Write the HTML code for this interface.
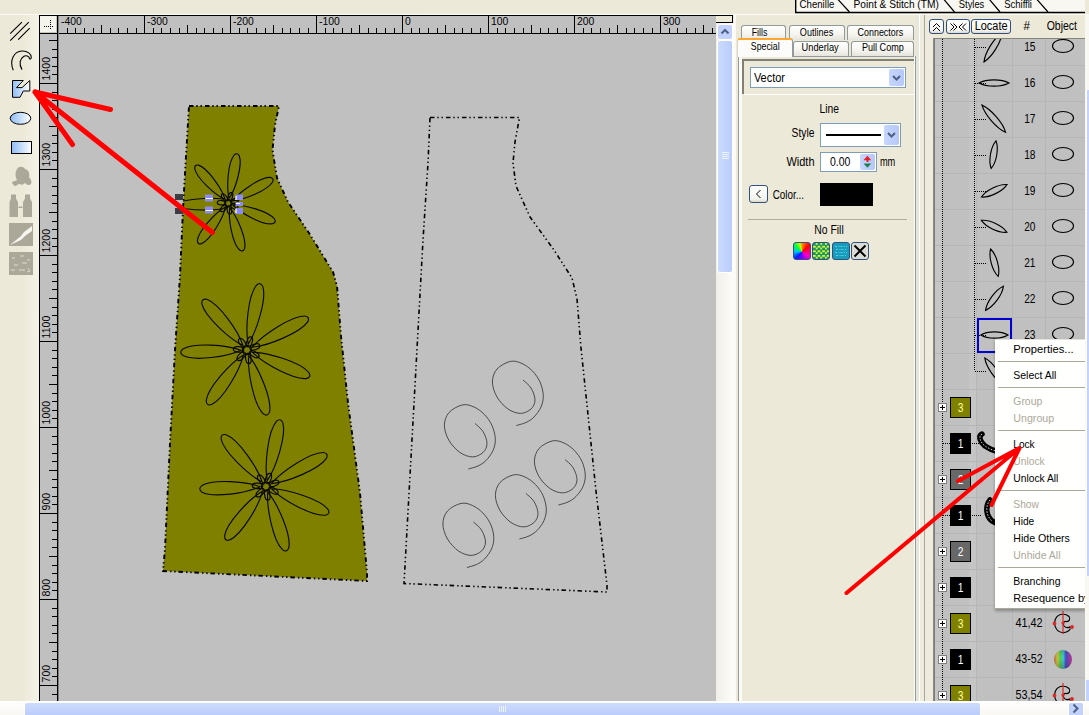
<!DOCTYPE html><html><head><meta charset="utf-8"><title>Embroidery editor</title><style>
html,body{margin:0;padding:0}
body{width:1089px;height:715px;overflow:hidden;background:#ece9d8;position:relative;font-family:"Liberation Sans",sans-serif;font-size:11px;color:#000}
.a{position:absolute}
svg{position:absolute;left:0;top:0}
svg text{font-family:"Liberation Sans",sans-serif}
.tab{position:absolute;box-sizing:border-box;border:1px solid #919b9c;border-bottom:none;border-radius:3px 3px 0 0;background:linear-gradient(#ffffff,#f6f5f0 55%,#e6e5dc)}
.btn{position:absolute;box-sizing:border-box;border:1px solid #33507c;border-radius:3px;background:linear-gradient(#ffffff,#f3f3ee 80%,#dcd8cc)}
.sep{position:absolute;left:998px;width:87px;height:1px;background:#aca899}
.sw{position:absolute;box-sizing:border-box;width:21px;height:21px;border:1px solid #000}
.plus{position:absolute;box-sizing:border-box;width:9px;height:9px;border:1px solid #808080;background:#fff}
</style></head><body>
<div class="a" style="left:0;top:15px;width:39px;height:686px;background:linear-gradient(90deg,#ece9d8 55%,#f4f2e8)"></div>
<div class="a" style="left:0;top:14px;width:420px;height:1px;background:#fbfaf4"></div>
<div class="a" style="left:40px;top:16px;width:676px;height:685px;background:#c0c0c0"></div>
<div class="a" style="left:40px;top:16px;width:17px;height:17px;background:#f4f3ec;box-sizing:border-box;border-right:1px solid #c8c5b2;border-bottom:1px solid #c8c5b2"></div>
<div class="a" style="left:716px;top:15px;width:17px;height:8px;box-sizing:border-box;background:#ece9d8;border:1px solid #000;border-left:none"></div>
<svg width="1089" height="715" viewBox="0 0 1089 715">
<g stroke="#000" stroke-width="1" shape-rendering="crispEdges" fill="none">
<path d="M39 15.5H717 M39.5 15V701 M57.5 16V701 M40 33.5H716"/>
<path d="M58.5 16V701" stroke="#808080"/>
<path d="M67.5 28V33 M75.5 28V33 M84.5 28V33 M93.5 28V33 M101.5 25V33 M110.5 28V33 M118.5 28V33 M127.5 28V33 M136.5 28V33 M144.5 16V33 M153.5 28V33 M161.5 28V33 M170.5 28V33 M179.5 28V33 M187.5 25V33 M196.5 28V33 M204.5 28V33 M213.5 28V33 M222.5 28V33 M230.5 16V33 M239.5 28V33 M247.5 28V33 M256.5 28V33 M265.5 28V33 M273.5 25V33 M282.5 28V33 M290.5 28V33 M299.5 28V33 M308.5 28V33 M316.5 16V33 M325.5 28V33 M333.5 28V33 M342.5 28V33 M351.5 28V33 M359.5 25V33 M368.5 28V33 M376.5 28V33 M385.5 28V33 M394.5 28V33 M402.5 16V33 M411.5 28V33 M419.5 28V33 M428.5 28V33 M437.5 28V33 M445.5 25V33 M454.5 28V33 M462.5 28V33 M471.5 28V33 M480.5 28V33 M488.5 16V33 M497.5 28V33 M505.5 28V33 M514.5 28V33 M523.5 28V33 M531.5 25V33 M540.5 28V33 M548.5 28V33 M557.5 28V33 M566.5 28V33 M574.5 16V33 M583.5 28V33 M591.5 28V33 M600.5 28V33 M609.5 28V33 M617.5 25V33 M626.5 28V33 M634.5 28V33 M643.5 28V33 M652.5 28V33 M660.5 16V33 M669.5 28V33 M677.5 28V33 M686.5 28V33 M695.5 28V33 M703.5 25V33 M712.5 28V33"/>
<path d="M49 40.5H57 M52 49.5H57 M52 57.5H57 M52 66.5H57 M52 74.5H57 M40 83.5H57 M52 92.5H57 M52 100.5H57 M52 109.5H57 M52 117.5H57 M49 126.5H57 M52 135.5H57 M52 143.5H57 M52 152.5H57 M52 160.5H57 M40 169.5H57 M52 178.5H57 M52 186.5H57 M52 195.5H57 M52 203.5H57 M49 212.5H57 M52 221.5H57 M52 229.5H57 M52 238.5H57 M52 246.5H57 M40 255.5H57 M52 264.5H57 M52 272.5H57 M52 281.5H57 M52 289.5H57 M49 298.5H57 M52 307.5H57 M52 315.5H57 M52 324.5H57 M52 332.5H57 M40 341.5H57 M52 350.5H57 M52 358.5H57 M52 367.5H57 M52 375.5H57 M49 384.5H57 M52 393.5H57 M52 401.5H57 M52 410.5H57 M52 418.5H57 M40 427.5H57 M52 436.5H57 M52 444.5H57 M52 453.5H57 M52 461.5H57 M49 470.5H57 M52 479.5H57 M52 487.5H57 M52 496.5H57 M52 504.5H57 M40 513.5H57 M52 522.5H57 M52 530.5H57 M52 539.5H57 M52 547.5H57 M49 556.5H57 M52 565.5H57 M52 573.5H57 M52 582.5H57 M52 590.5H57 M40 599.5H57 M52 608.5H57 M52 616.5H57 M52 625.5H57 M52 633.5H57 M49 642.5H57 M52 651.5H57 M52 659.5H57 M52 668.5H57 M52 676.5H57 M40 685.5H57 M52 694.5H57"/>
<path d="M44 26.500H54M50.500 20V30" stroke-dasharray="1 1"/>
</g>
<text x="61.0" y="25.0" font-size="11.2" fill="#000" textLength="20.8" lengthAdjust="spacingAndGlyphs">-400</text>
<text x="147.0" y="25.0" font-size="11.2" fill="#000" textLength="20.8" lengthAdjust="spacingAndGlyphs">-300</text>
<text x="233.0" y="25.0" font-size="11.2" fill="#000" textLength="20.8" lengthAdjust="spacingAndGlyphs">-200</text>
<text x="319.0" y="25.0" font-size="11.2" fill="#000" textLength="20.8" lengthAdjust="spacingAndGlyphs">-100</text>
<text x="405.0" y="25.0" font-size="11.2" fill="#000" textLength="5.8" lengthAdjust="spacingAndGlyphs">0</text>
<text x="491.0" y="25.0" font-size="11.2" fill="#000" textLength="17.4" lengthAdjust="spacingAndGlyphs">100</text>
<text x="577.0" y="25.0" font-size="11.2" fill="#000" textLength="17.4" lengthAdjust="spacingAndGlyphs">200</text>
<text x="663.0" y="25.0" font-size="11.2" fill="#000" textLength="17.4" lengthAdjust="spacingAndGlyphs">300</text>
<g transform="translate(49.6 80.4) rotate(-90)"><text x="0.0" y="0.0" font-size="11" fill="#000" textLength="23.5" lengthAdjust="spacingAndGlyphs">1400</text></g>
<g transform="translate(49.6 166.4) rotate(-90)"><text x="0.0" y="0.0" font-size="11" fill="#000" textLength="23.5" lengthAdjust="spacingAndGlyphs">1300</text></g>
<g transform="translate(49.6 252.4) rotate(-90)"><text x="0.0" y="0.0" font-size="11" fill="#000" textLength="23.5" lengthAdjust="spacingAndGlyphs">1200</text></g>
<g transform="translate(49.6 338.4) rotate(-90)"><text x="0.0" y="0.0" font-size="11" fill="#000" textLength="22.7" lengthAdjust="spacingAndGlyphs">1100</text></g>
<g transform="translate(49.6 424.4) rotate(-90)"><text x="0.0" y="0.0" font-size="11" fill="#000" textLength="23.5" lengthAdjust="spacingAndGlyphs">1000</text></g>
<g transform="translate(49.6 510.4) rotate(-90)"><text x="0.0" y="0.0" font-size="11" fill="#000" textLength="17.6" lengthAdjust="spacingAndGlyphs">900</text></g>
<g transform="translate(49.6 596.4) rotate(-90)"><text x="0.0" y="0.0" font-size="11" fill="#000" textLength="17.6" lengthAdjust="spacingAndGlyphs">800</text></g>
<g transform="translate(49.6 682.4) rotate(-90)"><text x="0.0" y="0.0" font-size="11" fill="#000" textLength="17.6" lengthAdjust="spacingAndGlyphs">700</text></g>
<polygon points="189,106 279,106 275,125 272.5,150 277,178 288,202 309,233 333,272 337,286 341,336 348,403 360,493 367,573 367,581 163,571 165,549 170,443 175,350 180,276 183,209 186,156" fill="#808000"/>
<polygon points="189,106 279,106 275,125 272.5,150 277,178 288,202 309,233 333,272 337,286 341,336 348,403 360,493 367,573 367,581 163,571 165,549 170,443 175,350 180,276 183,209 186,156" fill="none" stroke="#000" stroke-width="1.9" stroke-dasharray="4.500 2.800 1.400 2.800 1.400 3.100"/>
<g fill="none" stroke="#080800" stroke-width="1.15">
<path d="M229.1 198.5 C235.5 189.3 242.7 165.2 239.3 155.9 C237.9 153.4 236.4 153.1 234.2 155.0 C227.8 162.5 226.3 187.6 229.1 198.5Z"/>
<path d="M225.2 199.6 C222.1 188.9 207.9 168.3 198.6 165.1 C195.8 164.6 194.6 165.6 194.7 168.5 C196.5 178.1 215.0 195.0 225.2 199.6Z"/>
<path d="M232.5 200.9 C243.9 200.0 267.4 190.5 272.6 182.0 C273.7 179.3 273.0 178.0 270.1 177.4 C260.2 177.2 239.4 191.8 232.5 200.9Z"/>
<path d="M232.8 205.0 C240.5 213.2 262.8 225.2 272.5 223.8 C275.3 223.0 275.9 221.6 274.5 219.0 C268.4 211.2 244.0 204.5 232.8 205.0Z"/>
<path d="M229.7 207.8 C228.1 218.8 232.4 243.4 239.6 250.0 C242.0 251.6 243.5 251.2 244.6 248.5 C246.9 239.0 237.0 216.1 229.7 207.8Z"/>
<path d="M225.4 207.1 C215.6 212.4 198.5 230.8 197.4 240.5 C197.5 243.4 198.8 244.4 201.6 243.6 C210.6 239.8 223.2 218.0 225.4 207.1Z"/>
<circle cx="228.3" cy="203.2" r="3.6" stroke-width="1.3"/>
<ellipse cx="235.1" cy="203.2" rx="4.2" ry="2.2" stroke-width="1.2" transform="rotate(30 228.3 203.2)"/>
<ellipse cx="235.1" cy="203.2" rx="4.2" ry="2.2" stroke-width="1.2" transform="rotate(81 228.3 203.2)"/>
<ellipse cx="235.1" cy="203.2" rx="4.2" ry="2.2" stroke-width="1.2" transform="rotate(133 228.3 203.2)"/>
<ellipse cx="235.1" cy="203.2" rx="4.2" ry="2.2" stroke-width="1.2" transform="rotate(184 228.3 203.2)"/>
<ellipse cx="235.1" cy="203.2" rx="4.2" ry="2.2" stroke-width="1.2" transform="rotate(236 228.3 203.2)"/>
<ellipse cx="235.1" cy="203.2" rx="4.2" ry="2.2" stroke-width="1.2" transform="rotate(287 228.3 203.2)"/>
<ellipse cx="235.1" cy="203.2" rx="4.2" ry="2.2" stroke-width="1.2" transform="rotate(339 228.3 203.2)"/>
<path d="M248.2 344.1 C256.7 331.3 266.8 299.0 262.8 286.6 C261.2 283.2 259.2 282.8 256.4 285.3 C248.0 295.4 245.1 329.1 248.2 344.1Z"/>
<path d="M243.0 345.5 C238.3 331.1 219.0 303.7 206.8 299.3 C203.1 298.6 201.6 299.9 201.8 303.7 C204.6 316.3 229.3 338.9 243.0 345.5Z"/>
<path d="M252.3 347.2 C268.1 345.7 300.2 332.9 307.7 321.9 C309.4 318.4 308.5 316.6 304.6 316.0 C291.4 315.9 262.5 335.1 252.3 347.2Z"/>
<path d="M252.5 352.3 C263.4 363.4 293.2 379.9 306.2 378.6 C310.0 377.6 310.7 375.8 308.8 372.5 C300.6 362.2 268.0 352.4 252.5 352.3Z"/>
<path d="M248.8 355.7 C247.3 371.2 253.9 404.7 263.2 413.8 C266.4 416.1 268.2 415.5 269.6 411.9 C272.1 399.0 258.7 367.7 248.8 355.7Z"/>
<path d="M243.5 354.9 C230.4 362.8 207.8 387.7 206.2 400.6 C206.3 404.4 207.9 405.6 211.6 404.5 C223.3 399.0 240.0 369.7 243.5 354.9Z"/>
<path d="M241.0 350.2 C227.0 344.8 193.9 342.4 182.9 349.0 C180.0 351.4 180.0 353.4 183.1 355.6 C194.5 361.5 227.4 356.7 241.0 350.2Z"/>
<circle cx="247" cy="350" r="4.5" stroke-width="1.3"/>
<ellipse cx="255.5" cy="350" rx="5.2" ry="2.7" stroke-width="1.2" transform="rotate(30 247 350)"/>
<ellipse cx="255.5" cy="350" rx="5.2" ry="2.7" stroke-width="1.2" transform="rotate(81 247 350)"/>
<ellipse cx="255.5" cy="350" rx="5.2" ry="2.7" stroke-width="1.2" transform="rotate(133 247 350)"/>
<ellipse cx="255.5" cy="350" rx="5.2" ry="2.7" stroke-width="1.2" transform="rotate(184 247 350)"/>
<ellipse cx="255.5" cy="350" rx="5.2" ry="2.7" stroke-width="1.2" transform="rotate(236 247 350)"/>
<ellipse cx="255.5" cy="350" rx="5.2" ry="2.7" stroke-width="1.2" transform="rotate(287 247 350)"/>
<ellipse cx="255.5" cy="350" rx="5.2" ry="2.7" stroke-width="1.2" transform="rotate(339 247 350)"/>
<path d="M267.2 480.6 C276.0 467.8 286.6 435.3 282.8 422.7 C281.2 419.2 279.2 418.8 276.4 421.3 C267.8 431.3 264.4 465.3 267.2 480.6Z"/>
<path d="M262.1 481.9 C257.4 467.3 238.3 439.3 226.1 434.7 C222.4 433.9 220.9 435.2 221.1 439.0 C223.8 451.8 248.4 475.0 262.1 481.9Z"/>
<path d="M271.3 483.7 C287.0 482.2 319.0 469.4 326.4 458.4 C328.1 454.9 327.1 453.1 323.3 452.5 C310.1 452.4 281.4 471.6 271.3 483.7Z"/>
<path d="M271.5 488.8 C282.4 499.9 312.3 516.5 325.3 515.2 C329.1 514.3 329.8 512.5 327.9 509.2 C319.7 498.9 287.1 489.0 271.5 488.8Z"/>
<path d="M267.8 492.2 C266.4 507.5 273.1 540.7 282.5 549.7 C285.7 551.9 287.5 551.3 288.8 547.7 C291.4 534.9 277.8 503.9 267.8 492.2Z"/>
<path d="M262.4 491.3 C249.3 498.8 226.4 523.1 224.6 535.9 C224.6 539.7 226.2 540.9 229.8 539.9 C241.6 534.7 258.7 506.0 262.4 491.3Z"/>
<path d="M260.0 486.7 C246.0 481.3 212.8 478.9 201.9 485.6 C199.0 488.0 199.0 490.0 202.1 492.2 C213.6 498.1 246.4 493.2 260.0 486.7Z"/>
<circle cx="266" cy="486.5" r="4.5" stroke-width="1.3"/>
<ellipse cx="274.5" cy="486.5" rx="5.2" ry="2.7" stroke-width="1.2" transform="rotate(30 266 486.5)"/>
<ellipse cx="274.5" cy="486.5" rx="5.2" ry="2.7" stroke-width="1.2" transform="rotate(81 266 486.5)"/>
<ellipse cx="274.5" cy="486.5" rx="5.2" ry="2.7" stroke-width="1.2" transform="rotate(133 266 486.5)"/>
<ellipse cx="274.5" cy="486.5" rx="5.2" ry="2.7" stroke-width="1.2" transform="rotate(184 266 486.5)"/>
<ellipse cx="274.5" cy="486.5" rx="5.2" ry="2.7" stroke-width="1.2" transform="rotate(236 266 486.5)"/>
<ellipse cx="274.5" cy="486.5" rx="5.2" ry="2.7" stroke-width="1.2" transform="rotate(287 266 486.5)"/>
<ellipse cx="274.5" cy="486.5" rx="5.2" ry="2.7" stroke-width="1.2" transform="rotate(339 266 486.5)"/>
<path d="M222 199C212 197.500 195 198.500 183 201M222 209C212 210.500 195 210 183 208.500"/>
</g>
<g fill="#3c3c44"><rect x="175" y="194" width="8" height="6"/><rect x="175" y="208" width="8" height="6"/></g>
<g fill="#8c8cf0"><rect x="205" y="194.500" width="8" height="7"/><rect x="205" y="206.500" width="8" height="7"/><rect x="235.500" y="194.500" width="7.500" height="5.500"/><rect x="235.500" y="208" width="7.500" height="6"/><rect x="235.500" y="202" width="7.500" height="4"/></g>
<path d="M205.500 198.500H213M205.500 210.500H213M236 196V200M236 203.500H240M236 209V213" stroke="#fff" stroke-width="1.200"/>
<polygon points="430,117.5 519.5,117.5 515,142 513,163 516,186 530,217 554,250 572,278 577,299 581,348 596,491 607,585 607,592 404,583.5 404.5,575 417.5,340 423,240 428,163" fill="none" stroke="#000" stroke-width="1.6" stroke-dasharray="4.500 2.800 1.400 2.800 1.400 3.100"/>
<g fill="none" stroke="#3c3c3c" stroke-width="0.9">
<path d="M523.0 380.0C524.3 381.3 529.0 384.7 531.0 388.0C533.0 391.3 535.0 396.5 535.0 400.0C535.0 403.5 533.4 406.8 531.0 409.0C528.6 411.2 524.4 413.4 520.6 413.4C516.8 413.4 511.9 411.7 508.0 409.0C504.1 406.3 499.6 401.5 497.0 397.0C494.4 392.5 492.4 386.7 492.4 382.0C492.4 377.3 494.0 372.4 497.0 369.0C500.0 365.6 506.3 362.3 510.5 361.4C514.7 360.5 518.4 361.9 522.0 363.5C525.6 365.1 529.4 367.9 532.4 371.0C535.4 374.1 538.2 377.9 540.0 382.0C541.8 386.1 543.1 391.1 543.3 395.3C543.5 399.5 542.5 403.4 541.0 407.0C539.5 410.6 536.5 414.4 534.0 417.0C531.5 419.6 528.9 421.1 526.0 422.5C523.1 423.9 518.0 425.0 516.4 425.5"/>
<path d="M475.0 423.5C476.3 424.8 481.0 428.2 483.0 431.5C485.0 434.8 487.0 440.0 487.0 443.5C487.0 447.0 485.4 450.3 483.0 452.5C480.6 454.7 476.4 456.9 472.6 456.9C468.8 456.9 463.9 455.2 460.0 452.5C456.1 449.8 451.6 445.0 449.0 440.5C446.4 436.0 444.4 430.2 444.4 425.5C444.4 420.8 446.0 415.9 449.0 412.5C452.0 409.1 458.3 405.8 462.5 404.9C466.7 404.0 470.4 405.4 474.0 407.0C477.6 408.6 481.4 411.4 484.4 414.5C487.4 417.6 490.2 421.4 492.0 425.5C493.8 429.6 495.1 434.6 495.3 438.8C495.5 443.0 494.6 446.9 493.0 450.5C491.4 454.1 488.5 457.9 486.0 460.5C483.5 463.1 480.9 464.6 478.0 466.0C475.1 467.4 470.0 468.5 468.4 469.0"/>
<path d="M565.0 459.5C566.3 460.8 571.0 464.2 573.0 467.5C575.0 470.8 577.0 476.0 577.0 479.5C577.0 483.0 575.4 486.3 573.0 488.5C570.6 490.7 566.4 492.9 562.6 492.9C558.8 492.9 553.9 491.2 550.0 488.5C546.1 485.8 541.6 481.0 539.0 476.5C536.4 472.0 534.4 466.2 534.4 461.5C534.4 456.8 536.0 451.9 539.0 448.5C542.0 445.1 548.3 441.8 552.5 440.9C556.7 440.0 560.4 441.4 564.0 443.0C567.6 444.6 571.4 447.4 574.4 450.5C577.4 453.6 580.2 457.4 582.0 461.5C583.8 465.6 585.1 470.6 585.3 474.8C585.5 479.0 584.5 482.9 583.0 486.5C581.5 490.1 578.5 493.9 576.0 496.5C573.5 499.1 570.9 500.6 568.0 502.0C565.1 503.4 560.0 504.5 558.4 505.0"/>
<path d="M526.0 493.5C527.3 494.8 532.0 498.2 534.0 501.5C536.0 504.8 538.0 510.0 538.0 513.5C538.0 517.0 536.4 520.3 534.0 522.5C531.6 524.7 527.4 526.9 523.6 526.9C519.8 526.9 514.9 525.2 511.0 522.5C507.1 519.8 502.6 515.0 500.0 510.5C497.4 506.0 495.4 500.2 495.4 495.5C495.4 490.8 497.0 485.9 500.0 482.5C503.0 479.1 509.3 475.8 513.5 474.9C517.7 474.0 521.4 475.4 525.0 477.0C528.6 478.6 532.4 481.4 535.4 484.5C538.4 487.6 541.2 491.4 543.0 495.5C544.8 499.6 546.1 504.6 546.3 508.8C546.5 513.0 545.5 516.9 544.0 520.5C542.5 524.1 539.5 527.9 537.0 530.5C534.5 533.1 531.9 534.6 529.0 536.0C526.1 537.4 521.0 538.5 519.4 539.0"/>
<path d="M473.5 522.0C474.8 523.3 479.5 526.7 481.5 530.0C483.5 533.3 485.5 538.5 485.5 542.0C485.5 545.5 483.9 548.8 481.5 551.0C479.1 553.2 474.9 555.4 471.1 555.4C467.3 555.4 462.4 553.7 458.5 551.0C454.6 548.3 450.1 543.5 447.5 539.0C444.9 534.5 442.9 528.7 442.9 524.0C442.9 519.3 444.5 514.4 447.5 511.0C450.5 507.6 456.8 504.3 461.0 503.4C465.2 502.5 468.9 503.9 472.5 505.5C476.1 507.1 479.9 509.9 482.9 513.0C485.9 516.1 488.7 520.0 490.5 524.0C492.3 528.0 493.6 533.1 493.8 537.3C494.0 541.5 493.1 545.4 491.5 549.0C489.9 552.6 487.0 556.4 484.5 559.0C482.0 561.6 479.4 563.1 476.5 564.5C473.6 565.9 468.5 567.0 466.9 567.5"/>
</g>
</svg>
<svg width="40" height="300" viewBox="0 0 40 300">
<defs><linearGradient id="bg" x1="0" x2="1"><stop offset="0" stop-color="#8ebcf6"/><stop offset="1" stop-color="#ffffff"/></linearGradient></defs>
<g stroke="#000" stroke-width="1.1" fill="none"><path d="M10.200 33.700L21.900 22.200M10.200 40.600L28.800 22.200M18.200 39.700L29.700 28.200"/>
<path d="M13.300 70.200C9 60 14 51.500 22 51C27.500 50.800 31.500 54 31.300 57.500C31 59 30.500 59.200 29.800 59C29 56 26 55 24 56.200C20 58.500 18.500 64 22 69.600"/></g>
<path d="M12.500 80.500H23.300L16.500 87.600H22L29.800 80.500V91H23.300L20 97.300H12.500Z" fill="url(#bg)" stroke="#000" stroke-width="1"/>
<ellipse cx="20.500" cy="118.300" rx="10.300" ry="6" fill="url(#bg)" stroke="#000" stroke-width="1"/>
<rect x="11.500" y="141.500" width="20" height="12" fill="url(#bg)" stroke="#000" stroke-width="1"/>
<g fill="#aca899"><path d="M17 169c2-3 6-3 8 0c4 1 5 5 4 8c2 2 3 5 2 7c-2 2-4 1-6-1l-3 2c-2-2-4-1-6 1c-2 0-4-2-4-4c2-1 4-1 5-2c-2-3-2-8 0-11z"/>
<path d="M11 194.500h5v4l2 3.500v15h-8.500v-15l1.500-3.500zM25 194.500h5v4l2 3.500v15h-9v-15l2-3.500zM18.500 206.500h4v1.500h-4z"/>
<rect x="9" y="223" width="24" height="23"/><rect x="9" y="252" width="24" height="23"/></g>
<path d="M10 245L21 236L24 232L32 226L32 231L25 236L21 240Z" fill="#f6f5ee"/>
<path d="M12 258h3M20 256h4M27 260h3M14 265h4M22 263h5M11 270h4M19 270h6M28 268l2 3l-3 1" stroke="#dedbcc" stroke-width="1" fill="none"/>
</svg>
<div class="a" style="left:716px;top:23px;width:18px;height:678px;background:linear-gradient(90deg,#f1efe8,#fdfdfa)"></div>
<div class="a" style="left:717px;top:24px;width:16px;height:16px;background:#c2d2fc;border:1px solid #fff;border-radius:3px;box-sizing:border-box"></div>
<div class="a" style="left:717px;top:40px;width:16px;height:233px;background:linear-gradient(90deg,#cbdafd,#baccfb);border:1px solid #fff;border-radius:3px;box-sizing:border-box"></div>
<svg width="1089" height="715"><path d="M721.500 33.500L725 30L728.500 33.500" fill="none" stroke="#4d6185" stroke-width="2"/><path d="M722 152.500H729M722 154.500H729M722 156.500H729M722 158.500H729" stroke="#eef4fe" stroke-width="1"/></svg><div class="a" style="left:796px;top:0;width:289px;height:12px;background:#f8f7f1"></div>
<div class="a" style="left:420px;top:14px;width:669px;height:1px;background:#fdfcf8"></div>
<svg width="1089" height="715"><g stroke="#000" stroke-width="1.4" fill="none"><path d="M795.700 0V12.500H1085"/><path d="M838 -0.5L849.500 12M944 -0.5L954.500 12M989.500 -0.5L1000 12M1037 -0.5L1048 12" stroke-width="1.2"/></g><text x="799.6" y="7.9" font-size="11.6" fill="#000" textLength="34.8" lengthAdjust="spacingAndGlyphs">Chenille</text><text x="853.6" y="7.9" font-size="11.6" fill="#000" textLength="85.2" lengthAdjust="spacingAndGlyphs">Point &amp; Stitch (TM)</text><text x="958.8" y="7.9" font-size="11.6" fill="#000" textLength="25.5" lengthAdjust="spacingAndGlyphs">Styles</text><text x="1004.2" y="7.9" font-size="11.6" fill="#000" textLength="27.8" lengthAdjust="spacingAndGlyphs">Schiffli</text></svg>
<div class="a" style="left:734px;top:15px;width:2px;height:686px;background:#fbfaf5"></div>
<div class="a" style="left:738px;top:56px;width:178px;height:645px;box-sizing:border-box;border:1px solid #919b9c;border-bottom:none;background:#ece9d8"></div>
<div class="a" style="left:739px;top:57px;width:3px;height:644px;background:#fbfaf5"></div>
<div class="a" style="left:914px;top:56px;width:1px;height:645px;background:#fdfcf6"></div>
<div class="a" style="left:916px;top:15px;width:3px;height:686px;background:#e7e6dd"></div>
<div class="a" style="left:919px;top:15px;width:1px;height:686px;background:#fffff8"></div>
<div class="a" style="left:920px;top:15px;width:4px;height:686px;background:#eeebdf"></div>
<div class="a" style="left:924px;top:15px;width:1px;height:686px;background:#aca899"></div>
<div class="a" style="left:925px;top:15px;width:9px;height:686px;background:#eeeadd"></div>
<div class="tab" style="left:741px;top:25px;width:45px;height:15px"></div>
<div class="tab" style="left:789px;top:25px;width:56px;height:15px"></div>
<div class="tab" style="left:847px;top:25px;width:67px;height:15px"></div>
<div class="tab" style="left:793px;top:41px;width:56px;height:15px"></div>
<div class="tab" style="left:851px;top:41px;width:63px;height:15px"></div>
<div class="tab" style="left:737px;top:38px;width:56px;height:19px;background:#fcfcfa;border-top:2px solid #ffa530;border-bottom:none;border-left-color:#d8d8d0"></div>
<div class="a" style="left:742px;top:59px;width:172px;height:35px;box-sizing:border-box;border-left:2px solid #808075;border-top:2px solid #808075;background:#ece9d8"></div>
<div class="a" style="left:744px;top:94px;width:170px;height:1px;background:#fff"></div>
<div class="a" style="left:750px;top:67px;width:156px;height:21px;box-sizing:border-box;border:1px solid #7f9db9;background:#fff"></div>
<div class="a" style="left:889px;top:69px;width:15px;height:17px;background:linear-gradient(90deg,#c6d6fd,#b6c8fa);border-radius:2px"></div>
<div class="a" style="left:820px;top:123px;width:81px;height:24px;box-sizing:border-box;border:1px solid #7f9db9;background:#fff"></div>
<div class="a" style="left:884px;top:125px;width:15px;height:20px;background:linear-gradient(90deg,#c6d6fd,#b6c8fa);border-radius:2px"></div>
<div class="a" style="left:826px;top:134px;width:55px;height:2px;background:#000"></div>
<div class="a" style="left:820px;top:152px;width:57px;height:20px;box-sizing:border-box;border:1px solid #7f9db9;background:#fff"></div>
<div class="a" style="left:860px;top:154px;width:15px;height:16px;background:linear-gradient(90deg,#c6d6fd,#b6c8fa);border-radius:2px"></div>
<div class="btn" style="left:749px;top:185px;width:19px;height:18px"></div>
<div class="a" style="left:820px;top:183px;width:53px;height:23px;background:#000"></div>
<div class="a" style="left:748px;top:219px;width:159px;height:1px;background:#b0ad9c"></div>
<div class="btn" style="left:793px;top:242px;width:18px;height:18px;background:conic-gradient(from 0deg at 50% 55%,#ff9000,#ff0000 45deg,#ff00c0 120deg,#8000ff 180deg,#0020ff 225deg,#00c0ff 270deg,#00ff40 315deg,#c0ff00 345deg,#ff9000)"></div>
<div class="btn" style="left:812px;top:242px;width:18px;height:18px;background:conic-gradient(#e4f028 25%,#10986c 0 50%,#e4f028 0 75%,#10986c 0) 0 0/4.600px 4.600px"></div>
<div class="btn" style="left:832px;top:242px;width:18px;height:18px;background:#189cbc"></div>
<div class="btn" style="left:851px;top:242px;width:18px;height:18px;background:#dcdcd6"></div>
<svg width="1089" height="715"><g fill="none" stroke="#4d6185" stroke-width="2"><path d="M893 76L896.500 79.500L900 76"/><path d="M888 133L891.500 136.500L895 133"/></g><path d="M863.500 160.300H871.300L867.400 155.800Z" fill="#e81c24"/><path d="M866.500 160H868.500V162H866.500Z" fill="#e81c24"/><path d="M863.500 163.600H871.300L867.400 167.800Z" fill="#1c8048"/><path d="M760.500 190L756.500 194L760.500 198" fill="none" stroke="#000" stroke-width="1"/><path d="M854.500 245.500L865.500 256.500M865.500 245.500L854.500 256.500" stroke="#000" stroke-width="2"/><path d="M835 246.500h12M836 249.500h11M835 252.500h12M836 255.500h11" stroke="#58d0e8" stroke-width="1" stroke-dasharray="2 1.500 1 1"/><text x="751.7" y="35.6" font-size="10.2" fill="#000" textLength="15.6" lengthAdjust="spacingAndGlyphs">Fills</text><text x="799.8" y="35.6" font-size="10.2" fill="#000" textLength="33.4" lengthAdjust="spacingAndGlyphs">Outlines</text><text x="857.6" y="35.6" font-size="10.2" fill="#000" textLength="45.6" lengthAdjust="spacingAndGlyphs">Connectors</text><text x="750.8" y="49.6" font-size="10.2" fill="#000" textLength="28.8" lengthAdjust="spacingAndGlyphs">Special</text><text x="801.6" y="51.4" font-size="10.2" fill="#000" textLength="37.1" lengthAdjust="spacingAndGlyphs">Underlay</text><text x="861.9" y="51.4" font-size="10.2" fill="#000" textLength="42.0" lengthAdjust="spacingAndGlyphs">Pull Comp</text><text x="753.9" y="81.6" font-size="12" fill="#000" textLength="31.1" lengthAdjust="spacingAndGlyphs">Vector</text><text x="819.6" y="112.8" font-size="12.2" fill="#000" textLength="19.5" lengthAdjust="spacingAndGlyphs">Line</text><text x="791.6" y="136.6" font-size="12.2" fill="#000" textLength="22.9" lengthAdjust="spacingAndGlyphs">Style</text><text x="786.4" y="165.7" font-size="12.2" fill="#000" textLength="28.1" lengthAdjust="spacingAndGlyphs">Width</text><text x="829.9" y="165.7" font-size="12.2" fill="#000" textLength="20.4" lengthAdjust="spacingAndGlyphs">0.00</text><text x="879.9" y="165.7" font-size="12.2" fill="#000" textLength="15.4" lengthAdjust="spacingAndGlyphs">mm</text><text x="772.7" y="198.7" font-size="12.2" fill="#000" textLength="31.3" lengthAdjust="spacingAndGlyphs">Color...</text><text x="814.3" y="233.9" font-size="12.2" fill="#000" textLength="29.4" lengthAdjust="spacingAndGlyphs">No Fill</text></svg>
<div class="btn" style="left:929px;top:19px;width:15px;height:15px"></div>
<div class="btn" style="left:946px;top:19px;width:24px;height:15px"></div>
<div class="btn" style="left:971px;top:19px;width:40px;height:15px"></div>
<div class="a" style="left:934px;top:38px;width:151px;height:663px;background:#c0c0c0;box-sizing:border-box;border-left:1px solid #7c7c76;border-top:1px solid #85857c"></div>
<div class="a" style="left:933px;top:38px;width:1px;height:663px;background:#8c8c84"></div><div class="a" style="left:935px;top:39px;width:7px;height:662px;background:#c6c6c6"></div><div class="a" style="left:969px;top:39px;width:7px;height:662px;background:#c5c5c5"></div>
<div class="a" style="left:1085px;top:14px;width:4px;height:687px;background:#f8f7f2"></div>
<svg width="1089" height="715"><defs><clipPath id="lc"><rect x="935" y="39" width="150" height="662"/></clipPath></defs><g clip-path="url(#lc)"><g shape-rendering="crispEdges" fill="none"><path d="M935 65.5H1085 M935 101.5H1085 M935 137.5H1085 M935 173.5H1085 M935 209.5H1085 M935 245.5H1085 M935 281.5H1085 M935 317.5H1085 M935 353.5H1085 M935 389.5H1085 M935 425.5H1085 M935 461.5H1085 M935 497.5H1085 M935 533.5H1085 M935 569.5H1085 M935 605.5H1085 M935 641.5H1085 M935 677.5H1085 M976.500 39V701M1012.500 39V701M1045.500 39V701" stroke="#b6b6b6" stroke-width="1"/><path d="M942.500 39V701 M974.500 39V371" stroke="#000" stroke-width="1" stroke-dasharray="1 1"/><path d="M975 47.5H986 M975 83.5H986 M975 119.5H986 M975 155.5H986 M975 191.5H986 M975 227.5H986 M975 263.5H986 M975 299.5H986 M975 335.5H986 M975 371.5H986 M943 443.5H950M972 443.5H982 M943 515.5H950M972 515.5H982" stroke="#000" stroke-width="1" stroke-dasharray="1 1"/></g><path d="M-17 0C-8.5 -4.205 8.5 -4.205 17 0C8.5 4.205 -8.5 4.205 -17 0Z" transform="translate(993 47.5) rotate(-58)" fill="none" stroke="#000" stroke-width="1.15"/><path d="M-15 0C-7.5 -4.205 7.5 -4.205 15 0C7.5 4.205 -7.5 4.205 -15 0Z" transform="translate(994 83) rotate(0)" fill="none" stroke="#000" stroke-width="1.15"/><path d="M-18 0C-9.0 -4.205 9.0 -4.205 18 0C9.0 4.205 -9.0 4.205 -18 0Z" transform="translate(993.8 118.7) rotate(49)" fill="none" stroke="#000" stroke-width="1.15"/><path d="M-14 0C-7.0 -4.205 7.0 -4.205 14 0C7.0 4.205 -7.0 4.205 -14 0Z" transform="translate(993.6 154.7) rotate(-80)" fill="none" stroke="#000" stroke-width="1.15"/><path d="M-14.2 0C-7.1 -4.205 7.1 -4.205 14.2 0C7.1 4.205 -7.1 4.205 -14.2 0Z" transform="translate(994.2 190.8) rotate(-26)" fill="none" stroke="#000" stroke-width="1.15"/><path d="M-14.1 0C-7.05 -4.205 7.05 -4.205 14.1 0C7.05 4.205 -7.05 4.205 -14.1 0Z" transform="translate(994.2 226.3) rotate(25)" fill="none" stroke="#000" stroke-width="1.15"/><path d="M-14.2 0C-7.1 -4.205 7.1 -4.205 14.2 0C7.1 4.205 -7.1 4.205 -14.2 0Z" transform="translate(994.4 262.7) rotate(74.5)" fill="none" stroke="#000" stroke-width="1.15"/><path d="M-15 0C-7.5 -4.205 7.5 -4.205 15 0C7.5 4.205 -7.5 4.205 -15 0Z" transform="translate(994.5 298.3) rotate(-53.5)" fill="none" stroke="#000" stroke-width="1.15"/><path d="M-13.6 0C-6.8 -4.205 6.8 -4.205 13.6 0C6.8 4.205 -6.8 4.205 -13.6 0Z" transform="translate(994.4 335) rotate(0)" fill="none" stroke="#000" stroke-width="1.15"/><path d="M-16 0C-8.0 -4.205 8.0 -4.205 16 0C8.0 4.205 -8.0 4.205 -16 0Z" transform="translate(994 371) rotate(55)" fill="none" stroke="#000" stroke-width="1.15"/><ellipse cx="1063" cy="46" rx="10.500" ry="6.500" fill="none" stroke="#000" stroke-width="1.1"/><ellipse cx="1063" cy="82" rx="10.500" ry="6.500" fill="none" stroke="#000" stroke-width="1.1"/><ellipse cx="1063" cy="118" rx="10.500" ry="6.500" fill="none" stroke="#000" stroke-width="1.1"/><ellipse cx="1063" cy="154" rx="10.500" ry="6.500" fill="none" stroke="#000" stroke-width="1.1"/><ellipse cx="1063" cy="190" rx="10.500" ry="6.500" fill="none" stroke="#000" stroke-width="1.1"/><ellipse cx="1063" cy="226" rx="10.500" ry="6.500" fill="none" stroke="#000" stroke-width="1.1"/><ellipse cx="1063" cy="262" rx="10.500" ry="6.500" fill="none" stroke="#000" stroke-width="1.1"/><ellipse cx="1063" cy="298" rx="10.500" ry="6.500" fill="none" stroke="#000" stroke-width="1.1"/><ellipse cx="1063" cy="334" rx="10.500" ry="6.500" fill="none" stroke="#000" stroke-width="1.1"/><rect x="978" y="319" width="33" height="33" fill="none" stroke="#0000d0" stroke-width="2"/></g><g fill="none" stroke="#000" stroke-width="1"><path d="M933 27L936.500 23.500L940 27M933 31L936.500 27.500L940 31"/><path d="M950.500 23.500L954 27L950.500 30.500M953.500 23.500L957 27L953.500 30.500M962.500 23.500L959 27L962.500 30.500M966 23.500L962.500 27L966 30.500"/></g><text x="974.7" y="30.4" font-size="12" fill="#000" textLength="32.8" lengthAdjust="spacingAndGlyphs">Locate</text><text x="1023.6" y="29.8" font-size="12" fill="#000" textLength="6.4" lengthAdjust="spacingAndGlyphs">#</text><text x="1046.7" y="29.8" font-size="12" fill="#000" textLength="30.3" lengthAdjust="spacingAndGlyphs">Object</text><text x="1024.2" y="51.0" font-size="12" fill="#000" textLength="11.3" lengthAdjust="spacingAndGlyphs">15</text><text x="1024.2" y="87.0" font-size="12" fill="#000" textLength="11.3" lengthAdjust="spacingAndGlyphs">16</text><text x="1024.2" y="123.0" font-size="12" fill="#000" textLength="11.3" lengthAdjust="spacingAndGlyphs">17</text><text x="1024.2" y="159.0" font-size="12" fill="#000" textLength="11.3" lengthAdjust="spacingAndGlyphs">18</text><text x="1024.2" y="195.0" font-size="12" fill="#000" textLength="11.3" lengthAdjust="spacingAndGlyphs">19</text><text x="1024.2" y="231.0" font-size="12" fill="#000" textLength="11.3" lengthAdjust="spacingAndGlyphs">20</text><text x="1024.2" y="267.0" font-size="12" fill="#000" textLength="11.3" lengthAdjust="spacingAndGlyphs">21</text><text x="1024.2" y="303.0" font-size="12" fill="#000" textLength="11.3" lengthAdjust="spacingAndGlyphs">22</text><text x="1024.2" y="339.0" font-size="12" fill="#000" textLength="11.3" lengthAdjust="spacingAndGlyphs">23</text><text x="1015.4" y="627.0" font-size="12" fill="#000" textLength="27.2" lengthAdjust="spacingAndGlyphs">41,42</text><text x="1015.4" y="663.0" font-size="12" fill="#000" textLength="27.2" lengthAdjust="spacingAndGlyphs">43-52</text><text x="1015.4" y="699.0" font-size="12" fill="#000" textLength="27.2" lengthAdjust="spacingAndGlyphs">53,54</text></svg>
<div class="sw" style="left:950px;top:397px;background:#808000"></div>
<div class="plus" style="left:938px;top:403px"></div>
<div class="sw" style="left:950px;top:433px;background:#000"></div>
<div class="sw" style="left:950px;top:469px;background:#686868"></div>
<div class="plus" style="left:938px;top:475px"></div>
<div class="sw" style="left:950px;top:505px;background:#000"></div>
<div class="sw" style="left:950px;top:541px;background:#686868"></div>
<div class="plus" style="left:938px;top:547px"></div>
<div class="sw" style="left:950px;top:577px;background:#000"></div>
<div class="plus" style="left:938px;top:583px"></div>
<div class="sw" style="left:950px;top:613px;background:#808000"></div>
<div class="plus" style="left:938px;top:619px"></div>
<div class="sw" style="left:950px;top:649px;background:#000"></div>
<div class="plus" style="left:938px;top:655px"></div>
<div class="sw" style="left:950px;top:685px;background:#808000"></div>
<div class="plus" style="left:938px;top:691px"></div>
<svg width="1089" height="715"><g stroke="#000" stroke-width="1" shape-rendering="crispEdges"><path d="M940 407.5H945M942.500 405V410"/><path d="M940 479.5H945M942.500 477V482"/><path d="M940 551.5H945M942.500 549V554"/><path d="M940 587.5H945M942.500 585V590"/><path d="M940 623.5H945M942.500 621V626"/><path d="M940 659.5H945M942.500 657V662"/><path d="M940 695.5H945M942.500 693V698"/></g><text x="957.8" y="411.7" font-size="12" fill="#ffff90" textLength="5.7" lengthAdjust="spacingAndGlyphs">3</text><text x="957.8" y="447.7" font-size="12" fill="#fff" textLength="5.7" lengthAdjust="spacingAndGlyphs">1</text><text x="957.8" y="483.7" font-size="12" fill="#fff" textLength="5.7" lengthAdjust="spacingAndGlyphs">2</text><text x="957.8" y="519.7" font-size="12" fill="#fff" textLength="5.7" lengthAdjust="spacingAndGlyphs">1</text><text x="957.8" y="555.7" font-size="12" fill="#fff" textLength="5.7" lengthAdjust="spacingAndGlyphs">2</text><text x="957.8" y="591.7" font-size="12" fill="#fff" textLength="5.7" lengthAdjust="spacingAndGlyphs">1</text><text x="957.8" y="627.7" font-size="12" fill="#ffff90" textLength="5.7" lengthAdjust="spacingAndGlyphs">3</text><text x="957.8" y="663.7" font-size="12" fill="#fff" textLength="5.7" lengthAdjust="spacingAndGlyphs">1</text><text x="957.8" y="699.7" font-size="12" fill="#ffff90" textLength="5.7" lengthAdjust="spacingAndGlyphs">3</text><g fill="none" stroke="#000" stroke-width="1.2" transform="translate(0 0)"><path d="M1069 616.500C1066 613.500 1059 613 1056 618C1052.500 624 1056 631.500 1062 632.500C1066 633 1069 631 1070.500 628.500M1069 616.500C1071 619 1069 622 1066 621.500C1063.500 621 1062.500 624 1064 626C1065.500 628 1069 628 1070.500 626.500"/></g><g stroke="#e02828" stroke-width="1.2" fill="#e02828" transform="translate(0 0)"><path d="M1063 611V634" fill="none"/><circle cx="1054.500" cy="623.500" r="1.300"/><circle cx="1072" cy="627" r="1.300"/><circle cx="1063" cy="623" r="1"/></g><g fill="none" stroke="#000" stroke-width="1.2" transform="translate(0 72)"><path d="M1069 616.500C1066 613.500 1059 613 1056 618C1052.500 624 1056 631.500 1062 632.500C1066 633 1069 631 1070.500 628.500M1069 616.500C1071 619 1069 622 1066 621.500C1063.500 621 1062.500 624 1064 626C1065.500 628 1069 628 1070.500 626.500"/></g><g stroke="#e02828" stroke-width="1.2" fill="#e02828" transform="translate(0 72)"><path d="M1063 611V634" fill="none"/><circle cx="1054.500" cy="623.500" r="1.300"/><circle cx="1072" cy="627" r="1.300"/><circle cx="1063" cy="623" r="1"/></g></svg>
<div class="a" style="left:1054px;top:650px;width:18px;height:19px;border-radius:50%;background:radial-gradient(circle at 45% 40%,rgba(255,255,255,.15),rgba(90,90,90,.45) 75%),linear-gradient(90deg,#e06030,#e0d020 18%,#30d030 36%,#20c0d0 52%,#2030d0 66%,#8020c0 80%,#e020a0)"></div>
<svg width="1089" height="715"><g fill="none" stroke="#000" stroke-width="5.500" stroke-linecap="round"><path d="M982 434C978 436 980 442 985 446C988 448 992 450 996 451"/><path d="M990 500C985 506 986 516 992 521L996 523"/></g><g fill="none" stroke="#d8d8d8" stroke-width="1" stroke-dasharray="1.500 1.500"><path d="M982 434C978 436 980 442 985 446C988 448 992 450 996 451"/><path d="M990 500C985 506 986 516 992 521"/></g></svg>
<div class="a" style="left:0;top:701px;width:1089px;height:14px;background:linear-gradient(#ffffff,#f8f7f2)"></div>
<div class="a" style="left:24px;top:702px;width:957px;height:16px;background:linear-gradient(#cddbfd,#b8cafb);border:1px solid #fff;border-radius:3px;box-sizing:border-box"></div>
<div class="a" style="left:1068px;top:702px;width:16px;height:16px;background:#c2d2fc;border:1px solid #fff;border-radius:3px;box-sizing:border-box"></div>
<svg width="1089" height="715"><path d="M1073.500 704.500L1077.500 708.500L1073.500 712.500" fill="none" stroke="#4d6185" stroke-width="2"/><path d="M499.500 706V712M501.500 706V712M503.500 706V712M505.500 706V712" stroke="#eef4fe" stroke-width="1"/></svg>
<div class="a" style="left:995px;top:339px;width:90px;height:270px;background:#fffffd;box-sizing:border-box;border-top:1px solid #e4e4dc;border-bottom:1px solid #aca899;box-shadow:0 2px 3px rgba(0,0,0,.3)"></div>
<svg width="1085" height="715"><text x="1013.3" y="352.7" font-size="11" fill="#000" textLength="60.4" lengthAdjust="spacingAndGlyphs">Properties...</text><text x="1013.3" y="378.7" font-size="11" fill="#000" textLength="43.0" lengthAdjust="spacingAndGlyphs">Select All</text><text x="1013.3" y="404.7" font-size="11" fill="#aca899" textLength="28.9" lengthAdjust="spacingAndGlyphs">Group</text><text x="1013.3" y="421.7" font-size="11" fill="#aca899" textLength="40.9" lengthAdjust="spacingAndGlyphs">Ungroup</text><text x="1013.3" y="447.7" font-size="11" fill="#000" textLength="21.4" lengthAdjust="spacingAndGlyphs">Lock</text><text x="1013.3" y="464.7" font-size="11" fill="#aca899" textLength="31.4" lengthAdjust="spacingAndGlyphs">Unlock</text><text x="1013.3" y="481.7" font-size="11" fill="#000" textLength="45.1" lengthAdjust="spacingAndGlyphs">Unlock All</text><text x="1013.3" y="507.7" font-size="11" fill="#aca899" textLength="25.7" lengthAdjust="spacingAndGlyphs">Show</text><text x="1013.3" y="524.7" font-size="11" fill="#000" textLength="21.0" lengthAdjust="spacingAndGlyphs">Hide</text><text x="1013.3" y="541.7" font-size="11" fill="#000" textLength="56.6" lengthAdjust="spacingAndGlyphs">Hide Others</text><text x="1013.3" y="558.7" font-size="11" fill="#aca899" textLength="47.2" lengthAdjust="spacingAndGlyphs">Unhide All</text><text x="1013.3" y="584.7" font-size="11" fill="#000" textLength="47.2" lengthAdjust="spacingAndGlyphs">Branching</text><text x="1013.3" y="601.7" font-size="11" fill="#000" textLength="76.2" lengthAdjust="spacingAndGlyphs">Resequence by</text></svg>
<div class="sep" style="top:361px"></div>
<div class="sep" style="top:387px"></div>
<div class="sep" style="top:430px"></div>
<div class="sep" style="top:490px"></div>
<div class="sep" style="top:567px"></div>
<div class="a" style="left:1085px;top:14px;width:4px;height:687px;background:#f8f7f2"></div>
<div class="a" style="left:1086px;top:90px;width:3px;height:486px;background:#c3d3fd;border-left:1px solid #fff;box-sizing:border-box"></div>
<div class="a" style="left:1086px;top:680px;width:3px;height:21px;background:#c3d3fd"></div>
<svg width="1089" height="715"><g stroke="#ff0000" stroke-linecap="round" fill="none"><path d="M35 92L212.500 232.500M35 92L110.500 109.500M35 92L72.500 144.500" stroke-width="5"/><path d="M1019.500 448L846.500 593M1019.500 448L958 481M1019.500 448L991.500 505" stroke-width="4"/></g></svg>
</body></html>
